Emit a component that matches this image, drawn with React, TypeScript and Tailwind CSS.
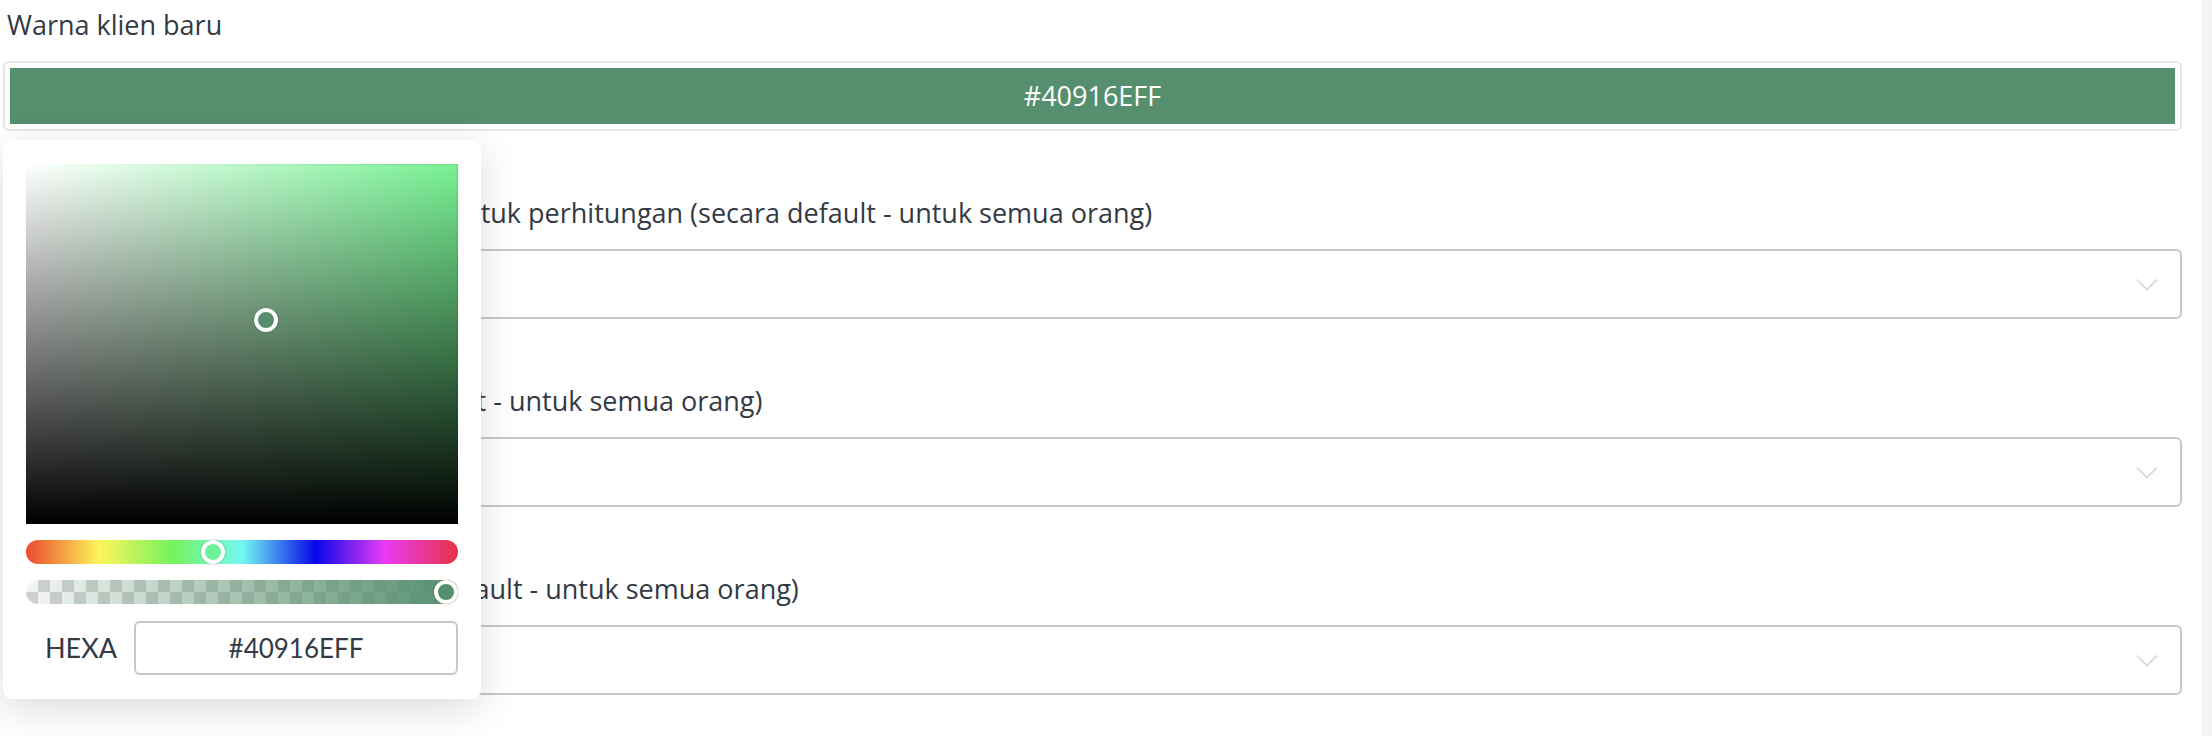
import React from "react";

const GREEN = "#568f6e";

const fields = [
    { label: "Mata uang utama yang digunakan untuk perhitungan (secara default - untuk semua orang)", indent: "ml-[10px]" },
    { label: "Zona waktu pelaporan (secara default - untuk semua orang)", indent: "ml-[8px]" },
    { label: "Metode pembayaran tim (secara default - untuk semua orang)", indent: "ml-[15px]" },
];

const Chevron: React.FC = () => (
    <svg width="22" height="13" viewBox="0 0 22 13" fill="none">
        <path d="M1 1.5L11 11.5L21 1.5" stroke="#d5d5d5" strokeWidth="1.6" />
    </svg>
);

const ColorPicker: React.FC = () => (
    <div className="absolute left-0 top-[calc(100%+9px)] z-10 w-[478px] rounded-[9px] bg-white px-[23px] pt-[24px] pb-[24px] shadow-[0_10px_40px_rgba(0,0,0,0.14)]">
        {/* saturation / value area */}
        <div className="relative h-[360px] w-[432px] bg-[#78f294] shadow-[inset_0_0_3px_rgba(0,0,0,0.2)]">
            <div className="absolute inset-0 bg-linear-to-r from-white to-transparent" />
            <div className="absolute inset-0 bg-linear-to-t from-black to-transparent" />
            <div className="absolute left-[228px] top-[144px] h-[24px] w-[24px] rounded-full border-[4px] border-white bg-[#568f6e] shadow-[0_0_2px_rgba(0,0,0,0.3)]" />
        </div>

        {/* hue */}
        <div className="relative mt-[16px] h-[24px] rounded-full bg-[linear-gradient(to_right,#ea4a2e_0%,#fdf55a_17%,#74f35e_34%,#72f8f2_50%,#0707e8_67%,#e93cf5_83%,#e63346_100%)]">
            <div className="absolute left-[175px] top-0 h-[24px] w-[24px] rounded-full border-[4px] border-white bg-[#70f09a] shadow-[0_0_2px_rgba(0,0,0,0.3)]" />
        </div>

        {/* alpha */}
        <div className="relative mt-[16px] h-[24px] rounded-full bg-[conic-gradient(#cfd1cf_25%,#f4f5f4_0_50%,#cfd1cf_0_75%,#f4f5f4_0)] bg-size-[24px_24px]">
            <div className="absolute inset-0 rounded-full bg-linear-to-r from-[#568f6e00] to-[#568f6e]" />
            <div className="absolute right-0 top-0 h-[24px] w-[24px] rounded-full border-[4px] border-white bg-[#568f6e] shadow-[0_0_2px_rgba(0,0,0,0.3)]" />
        </div>

        <div className="mt-[17px] flex items-center">
            <span className="w-[108px] pl-[19px] font-['Lato',sans-serif] text-[27px] text-[#333a44]">
                HEXA
            </span>
            <div className="flex h-[54px] flex-1 items-center justify-center rounded-[6px] border-2 border-[#c8c8c8] font-['Lato',sans-serif] text-[26px] text-[#333a44]">
                #40916EFF
            </div>
        </div>
    </div>
);

export default function App() {
    return (
        <div className="flex h-[736px] w-full overflow-hidden bg-white font-['Open_Sans',sans-serif] text-[#333a44]">
            <div className="flex-1 pt-[7px] pl-[3px] pr-[20px]">
                <div className="relative mb-[64px]">
                    <div className="ml-[4px] h-[36px] text-[27px] leading-[36px]">Warna klien baru</div>
                    <div className="mt-[18px] h-[70px] rounded-[6px] border-2 border-[#e7e7e7] p-[5px]">
                        <div className="flex h-full items-center justify-center text-[27px] text-white" style={{ backgroundColor: GREEN }}>
                            #40916EFF
                        </div>
                    </div>
                    <ColorPicker />
                </div>

                {fields.map((f) => (
                    <div key={f.label} className="mb-[64px]">
                        <div className={`${f.indent} h-[36px] whitespace-nowrap text-[27px] leading-[36px]`}>{f.label}</div>
                        <div className="mt-[18px] flex h-[70px] items-center justify-end rounded-[6px] border-2 border-[#c9c9c9] pr-[22px]">
                            <Chevron />
                        </div>
                    </div>
                ))}
            </div>
            <div className="w-[10px] bg-[#f4f4f4]" />
        </div>
    );
}
